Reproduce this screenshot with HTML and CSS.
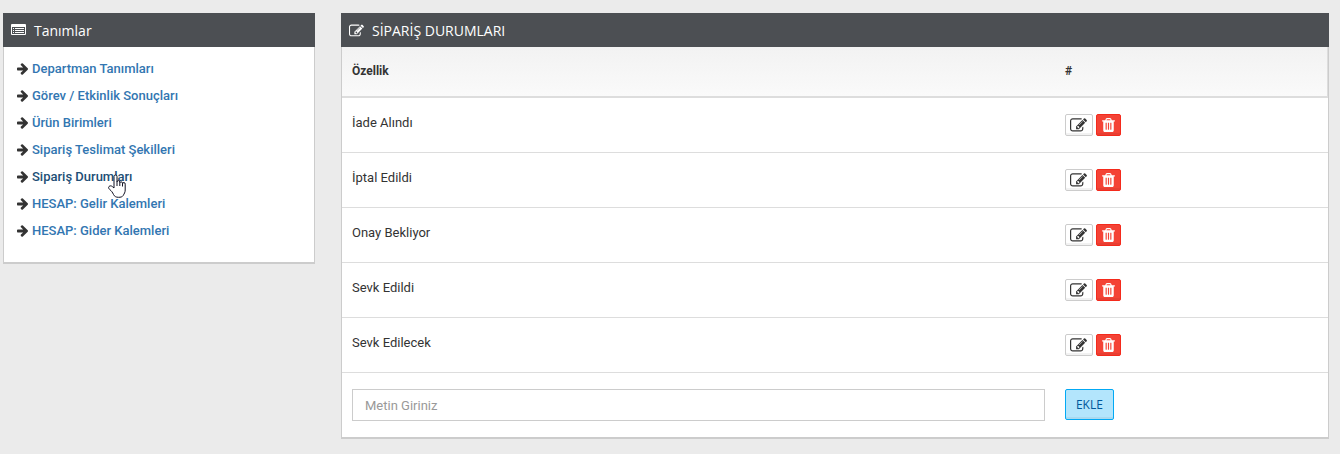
FILE: index.html
```html
<!DOCTYPE html>
<html lang="tr">
<head>
  <meta charset="UTF-8" />
  <meta name="viewport" content="width=device-width, initial-scale=1" />
  <title>Sipariş Durumları</title>
  <link rel="stylesheet" href="styles.css">
</head>
<body>
  <!-- ikonlar -->
  <svg class="sprite" aria-hidden="true">
    <symbol id="i-edit" viewBox="0 0 1792 1792"><path d="M888 1184l116-116-152-152-116 116v56h96v96h56zm440-720q-16-16-33 1L945 815q-17 17-1 33t33-1l350-350q17-17 1-33zm80 594v190q0 119-84.500 203.500T1120 1536H288q-119 0-203.500-84.500T0 1248V416q0-119 84.500-203.500T288 128h832q63 0 117 25 15 7 18 23 3 17-9 29l-49 49q-14 14-32 8-23-6-45-6H288q-66 0-113 47t-47 113v832q0 66 47 113t113 47h832q66 0 113-47t47-113v-126q0-13 9-22l64-64q15-15 35-7t20 29zm-96-738l288 288-672 672H640V992zm444 132l-92 92-288-288 92-92q28-28 68-28t68 28l152 152q28 28 28 68t-28 68z"/></symbol>
    <symbol id="i-trash" viewBox="192 128 1408 1536"><path d="M704 1376V672q0-14-9-23t-23-9h-64q-14 0-23 9t-9 23v704q0 14 9 23t23 9h64q14 0 23-9t9-23zm256 0V672q0-14-9-23t-23-9h-64q-14 0-23 9t-9 23v704q0 14 9 23t23 9h64q14 0 23-9t9-23zm256 0V672q0-14-9-23t-23-9h-64q-14 0-23 9t-9 23v704q0 14 9 23t23 9h64q14 0 23-9t9-23zM672 384h448l-48-117q-7-9-17-11H738q-10 2-17 11zm928 32v64q0 14-9 23t-23 9h-96v948q0 83-47 143.500t-113 60.500H480q-66 0-113-58.500T320 1464V512h-96q-14 0-23-9t-9-23v-64q0-14 9-23t23-9h309l70-167q15-37 54-63t79-26h320q40 0 79 26t54 63l70 167h309q14 0 23 9t9 23z"/></symbol>
    <symbol id="i-arrow" viewBox="128 181 1472 1558"><path d="M1600 960q0 54-37 91l-651 651q-39 37-91 37-51 0-90-37l-75-75q-38-38-38-91t38-91l293-293H245q-52 0-84.500-37.500T128 1024V896q0-53 32.500-90.500T245 768h704L656 474q-38-36-38-90t38-90l75-75q38-38 90-38 53 0 91 38l651 651q37 35 37 90z"/></symbol>
    <symbol id="i-list" viewBox="0 0 15 16"><path fill-rule="evenodd" d="M1 1h13a1 1 0 0 1 1 1v9a1 1 0 0 1-1 1H1a1 1 0 0 1-1-1V2a1 1 0 0 1 1-1zM1 4v7h13V4z"/><path d="M2 5h1v1H2zM4 5h9v1H4zM2 7h1v1H2zM4 7h9v1H4zM2 9h1v1H2zM4 9h9v1H4z"/></symbol>
  </svg>

  <div class="page">
    <aside class="widget sidebar">
      <h2 class="widget-header"><svg class="icon"><use href="#i-list"/></svg>Tanımlar</h2>
      <ul class="menu">
        <li><svg><use href="#i-arrow"/></svg><a href="#">Departman Tanımları</a></li>
        <li><svg><use href="#i-arrow"/></svg><a href="#">Görev / Etkinlik Sonuçları</a></li>
        <li><svg><use href="#i-arrow"/></svg><a href="#">Ürün Birimleri</a></li>
        <li><svg><use href="#i-arrow"/></svg><a href="#">Sipariş Teslimat Şekilleri</a></li>
        <li class="active"><svg><use href="#i-arrow"/></svg><a href="#">Sipariş Durumları</a>
          <svg class="pointer" viewBox="0 0 18 24"><path d="M6 14V2.500a1.500 1.500 0 0 1 3 0V8a1.400 1.400 0 0 1 2.800 0v.8a1.400 1.400 0 0 1 2.700.2v.8a1.300 1.300 0 0 1 2.700.3V16c0 2.500-1 3.500-2 5.500-1 1.500-2.500 1.800-4.700 1.800-2.500 0-4-.8-5-2.800-1-2.200-2-3.500-3.800-5C.4 14.200.3 13.200 1 12.500c1-1 2.500-.8 3.500.2L6 14M9 8v4M11.800 8.800V12M14.500 9.800v2.700"/></svg>
        </li>
        <li><svg><use href="#i-arrow"/></svg><a href="#">HESAP: Gelir Kalemleri</a></li>
        <li><svg><use href="#i-arrow"/></svg><a href="#">HESAP: Gider Kalemleri</a></li>
      </ul>
    </aside>

    <main class="widget content">
      <h2 class="widget-header"><svg class="icon"><use href="#i-edit"/></svg>SİPARİŞ DURUMLARI</h2>
      <table class="table">
        <thead>
          <tr><th class="col-name">Özellik</th><th>#</th></tr>
        </thead>
        <tbody>
          <tr>
            <td>İade Alındı</td>
            <td><div class="actions">
              <button type="button" class="btn btn-edit" aria-label="Düzenle"><svg><use href="#i-edit"/></svg></button>
              <button type="button" class="btn btn-delete" aria-label="Sil"><svg><use href="#i-trash"/></svg></button>
            </div></td>
          </tr>
          <tr>
            <td>İptal Edildi</td>
            <td><div class="actions">
              <button type="button" class="btn btn-edit" aria-label="Düzenle"><svg><use href="#i-edit"/></svg></button>
              <button type="button" class="btn btn-delete" aria-label="Sil"><svg><use href="#i-trash"/></svg></button>
            </div></td>
          </tr>
          <tr>
            <td>Onay Bekliyor</td>
            <td><div class="actions">
              <button type="button" class="btn btn-edit" aria-label="Düzenle"><svg><use href="#i-edit"/></svg></button>
              <button type="button" class="btn btn-delete" aria-label="Sil"><svg><use href="#i-trash"/></svg></button>
            </div></td>
          </tr>
          <tr>
            <td>Sevk Edildi</td>
            <td><div class="actions">
              <button type="button" class="btn btn-edit" aria-label="Düzenle"><svg><use href="#i-edit"/></svg></button>
              <button type="button" class="btn btn-delete" aria-label="Sil"><svg><use href="#i-trash"/></svg></button>
            </div></td>
          </tr>
          <tr>
            <td>Sevk Edilecek</td>
            <td><div class="actions">
              <button type="button" class="btn btn-edit" aria-label="Düzenle"><svg><use href="#i-edit"/></svg></button>
              <button type="button" class="btn btn-delete" aria-label="Sil"><svg><use href="#i-trash"/></svg></button>
            </div></td>
          </tr>
          <tr class="add-row">
            <td><input type="text" class="form-control" placeholder="Metin Giriniz" aria-label="Metin Giriniz" /></td>
            <td><button type="submit" class="btn btn-add">EKLE</button></td>
          </tr>
        </tbody>
      </table>
    </main>
  </div>
</body>
</html>
```
FILE: styles.css
```css
* {
  box-sizing: border-box;
}
body {
  margin: 0;
  background: #ebebeb;
  font-family: Roboto, "Open Sans", sans-serif;
  font-size: 13px;
  line-height: 20px;
  color: #333;
}
svg {
  fill: currentColor;
}
.sprite {
  display: none;
}
.page {
  display: flex;
  align-items: flex-start;
  gap: 26px;
  padding: 13px 11px 13px 3px;
}
.widget {
  background: #fff;
  border: 1px solid #ccc;
  border-top: 0;
  border-bottom-width: 2px;
}
.sidebar {
  flex: 0 0 312px;
}
.content {
  flex: 1;
}
.widget-header {
  display: flex;
  align-items: center;
  gap: 8px;
  height: 34px;
  margin: 0 -1px;
  padding: 2px 8px 0;
  background: #4c4f53;
  color: #fff;
  font-family: "Open Sans", sans-serif;
  font-size: 14px;
  font-weight: 400;
}
.widget-header .icon {
  width: 15px;
  height: 16px;
}

/* sol menü */
.menu {
  list-style: none;
  margin: 0;
  padding: 8px 13px 18px;
}
.menu li {
  position: relative;
  display: flex;
  align-items: center;
  gap: 4px;
  height: 27px;
}
.menu li > svg:first-child {
  width: 11px;
  height: 12px;
}
.menu a {
  color: #3276b1;
  font-weight: 500;
  text-decoration: none;
}
.menu .active a,
.menu a:hover {
  color: #214e75;
}
.menu .pointer {
  position: absolute;
  left: 91px;
  top: 11px;
  width: 18px;
  height: 24px;
  fill: #fff;
  stroke: #112;
  stroke-linejoin: round;
}

/* tablo */
.table {
  width: 100%;
  border-collapse: separate;
  border-spacing: 0;
  table-layout: fixed;
}
.table th {
  height: 51px;
  padding: 0 10px 2px;
  border-bottom: 2px solid #ddd;
  background: linear-gradient(#f2f2f2, #fafafa);
  font-size: 12px;
  font-weight: 700;
  text-align: left;
}
.table th:last-child {
  border-right: 1px solid #ddd;
}
.col-name {
  width: 72.3%;
}
.table td {
  height: 55px;
  padding: 15px 10px;
  border-bottom: 1px solid #ddd;
  vertical-align: top;
}
.table .add-row td {
  padding: 16px 10px;
  border-bottom: 0;
}
.actions {
  display: flex;
  gap: 3px;
  padding-top: 1px;
}
.btn {
  display: flex;
  align-items: center;
  justify-content: center;
  padding: 0;
  border: 1px solid #ccc;
  border-radius: 2px;
  box-shadow: inset 0 -2px 0 rgba(0, 0, 0, 0.05);
  cursor: pointer;
}
.btn-edit {
  width: 28px;
  height: 22px;
  background: #fff;
  color: #333;
}
.btn-edit svg {
  width: 17px;
  height: 17px;
}
.btn-delete {
  width: 25px;
  height: 22px;
  background: #f44336;
  border-color: #f42a1c;
  color: #fff;
}
.btn-delete svg {
  width: 13px;
  height: 14px;
}
.btn-add {
  height: 31px;
  padding: 0 10px;
  background: #b3e5fc;
  border-color: #03a9f4;
  color: #01579b;
  font-family: "Open Sans", sans-serif;
  font-size: 12px;
}
.form-control {
  display: block;
  width: 100%;
  height: 32px;
  padding: 0 12px;
  border: 1px solid #ccc;
  font-family: inherit;
  font-size: 13px;
  color: #333;
}
.form-control::placeholder {
  color: #999;
}
```
